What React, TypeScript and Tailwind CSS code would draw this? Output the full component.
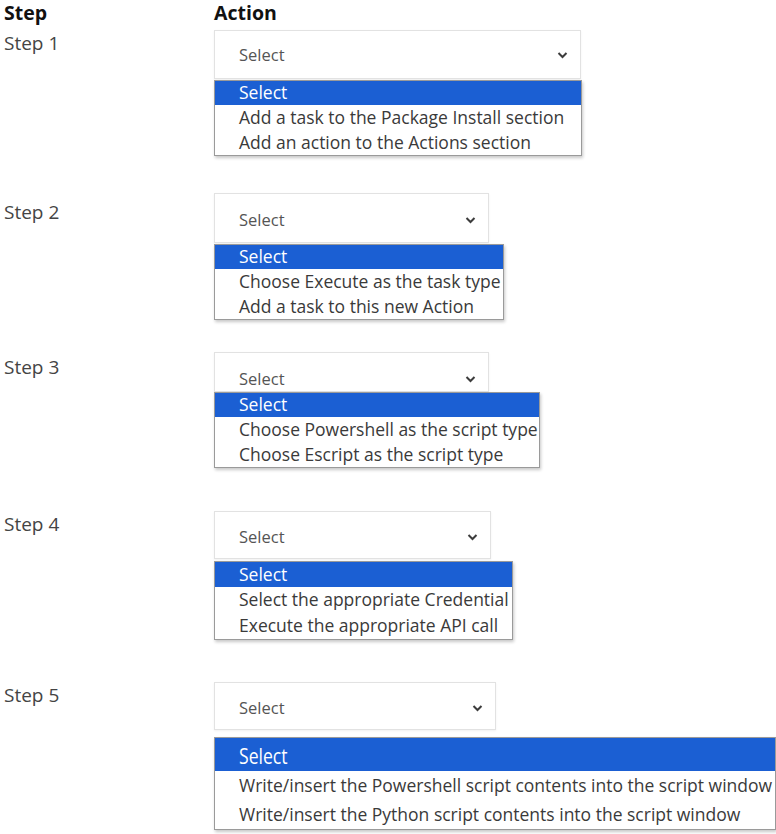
const steps = [
  {
    label: "Step 1",
    row: "mt-[4px]",
    labelPad: "pt-0",
    box: "w-[367px] h-[49px]",
    text: "",
    list: "mt-[1px] w-[368px]",
    head: "h-[24px] text-[17.5px]",
    item: "h-[25px]",
    options: ["Add a task to the Package Install section", "Add an action to the Actions section"],
  },
  {
    label: "Step 2",
    row: "mt-[37px]",
    labelPad: "pt-[6px]",
    box: "w-[275px] h-[50px]",
    text: "pt-[3px]",
    list: "mt-[1px] w-[290px]",
    head: "h-[24px] text-[17.5px]",
    item: "h-[25px]",
    options: ["Choose Execute as the task type", "Add a task to this new Action"],
  },
  {
    label: "Step 3",
    row: "mt-[32px]",
    labelPad: "pt-[2px]",
    box: "w-[275px] h-[40px]",
    text: "pt-[14px]",
    list: "mt-0 w-[326px]",
    head: "h-[24px] text-[17.5px]",
    item: "h-[25px]",
    options: ["Choose Powershell as the script type", "Choose Escript as the script type"],
  },
  {
    label: "Step 4",
    row: "mt-[43px]",
    labelPad: "pt-0",
    box: "w-[277px] h-[48px]",
    text: "pt-[3px]",
    list: "mt-[2px] w-[299px]",
    head: "h-[25px] text-[17.5px]",
    item: "h-[26px]",
    options: ["Select the appropriate Credential", "Execute the appropriate API call"],
  },
  {
    label: "Step 5",
    row: "mt-[42px]",
    labelPad: "pt-0",
    box: "w-[282px] h-[48px]",
    text: "pt-[4px]",
    list: "mt-[7px] w-[562px]",
    head: "h-[33px] text-[22px]",
    item: "h-[29px]",
    options: [
      "Write/insert the Powershell script contents into the script window",
      "Write/insert the Python script contents into the script window",
    ],
  },
];

function Chevron() {
  return (
    <svg width="11" height="8" viewBox="0 0 11 8" className="shrink-0">
      <path d="M1.5 2 L5.5 6 L9.5 2" fill="none" stroke="#3c3c3c" strokeWidth="2" />
    </svg>
  );
}

export default function App() {
  return (
    <div className="w-[776px] h-[834px] overflow-hidden bg-white font-['Open_Sans',sans-serif] text-[#3a3a3a]">
      <div className="flex h-[26px] items-center text-[19.5px] leading-[26px] font-bold text-[#111]">
        <div className="w-[214px] pl-[4px]">Step</div>
        <div>Action</div>
      </div>

      {steps.map((s, i) => (
        <div key={s.label} className={`flex ${s.row}`}>
          <div className={`w-[214px] shrink-0 pl-[4px] text-[19px] leading-[26px] text-[#444] ${s.labelPad}`}>
            {s.label}
          </div>
          <div className="flex flex-col">
            <div
              className={`flex items-center justify-between border border-[#e2e2e2] bg-white pl-[24px] pr-[12px] shadow-[0_1px_2px_rgba(0,0,0,0.06)] ${s.box}`}
            >
              <span className={`text-[16.5px] leading-[22px] text-[#555] ${s.text}`}>Select</span>
              <span className={s.text}>
                <Chevron />
              </span>
            </div>
            <div className={`border border-[#9a9a9a] bg-white shadow-[1px_2px_3px_rgba(0,0,0,0.22)] ${s.list}`}>
              <div className={`flex items-center bg-[#1b5fd3] pl-[24px] leading-none text-white ${s.head}`}>
                <span className={i === 4 ? "origin-left scale-x-[0.8] inline-block" : ""}>Select</span>
              </div>
              {s.options.map((o) => (
                <div key={o} className={`flex items-center whitespace-nowrap pl-[24px] text-[17.5px] leading-none ${s.item}`}>
                  {o}
                </div>
              ))}
            </div>
          </div>
        </div>
      ))}
    </div>
  );
}
